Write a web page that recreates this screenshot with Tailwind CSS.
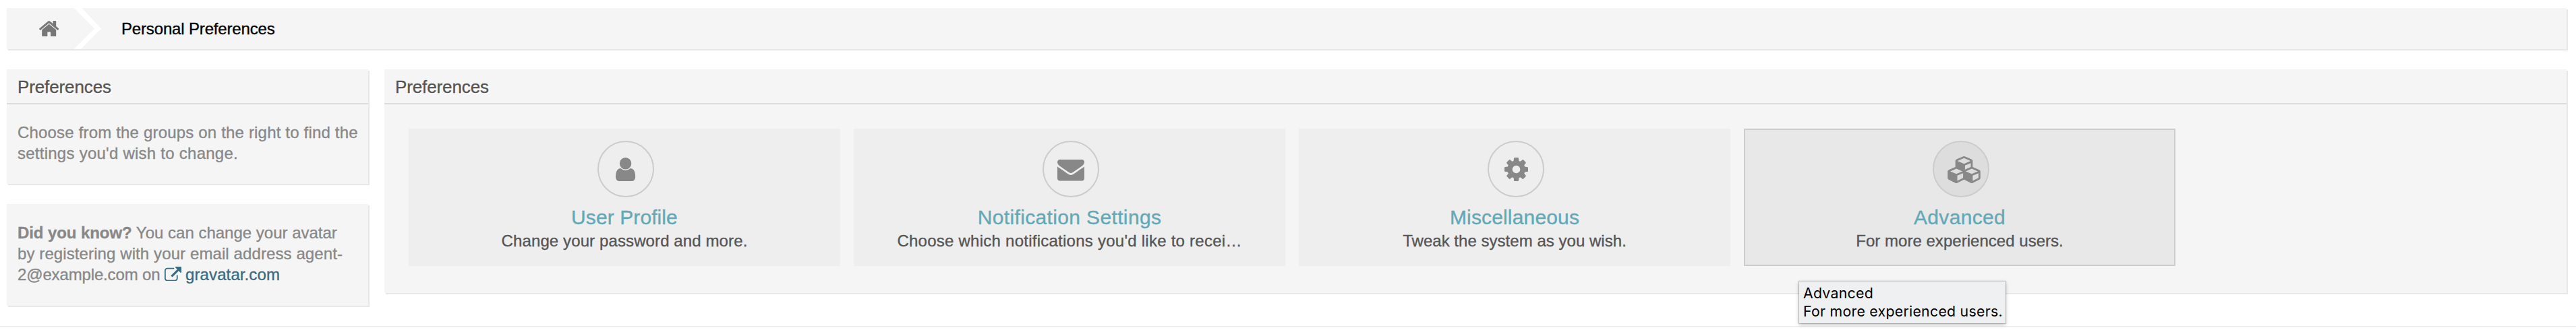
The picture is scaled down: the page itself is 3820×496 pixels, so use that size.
<!DOCTYPE html>
<html lang="en">
<head>
<meta charset="utf-8">
<title>Personal Preferences</title>
<script src="https://cdn.jsdelivr.net/npm/@tailwindcss/browser@4"></script>
</head>
<body class="h-[496px] overflow-hidden bg-white pt-3 font-['Liberation_Sans',Arial,sans-serif] text-2xl text-[#888] [-webkit-text-stroke:0.35px]">

<!-- Breadcrumb -->
<nav class="ml-[10px] mr-[14px] flex h-[61px] items-center bg-[#f5f5f5] shadow-[2px_2px_0_#e8e8e8]">
  <a class="ml-12 w-[51px]">
    <svg class="h-[23.4px] w-[29.4px]" viewBox="89 253 1614 1283" fill="#777"><path d="M1472 992v480q0 26-19 45t-45 19h-384v-384h-256v384h-384q-26 0-45-19t-19-45v-480q0-1 .5-3t.5-3l575-474 575 474q1 2 1 6zm223-69l-62 74q-8 9-21 11h-3q-13 0-21-7l-692-577-692 577q-12 8-24 7-13-2-21-11l-62-74q-8-10-7-23.5t11-21.5l719-599q32-26 76-26t76 26l244 204v-195q0-14 9-23t23-9h192q14 0 23 9t9 23v408l219 182q10 8 11 21.5t-7 23.5z"/></svg>
  </a>
  <svg class="h-[61px] w-[41px]" viewBox="0 0 41 61" fill="#fff"><path d="M1 0H12.500L41 30.500L11 61H.5L31 30.500z"/></svg>
  <span class="ml-[30px] leading-[27px] tracking-[-0.16px] text-black">Personal Preferences</span>
</nav>

<div class="ml-[10px] mr-[14px] mt-[30px] flex items-start gap-6">
  <!-- Sidebar -->
  <aside class="flex w-[536px] shrink-0 flex-col gap-[30px]">
    <section class="h-[170px] bg-[#f5f5f5] shadow-[2px_2px_0_#e8e8e8]">
      <h2 class="h-[52px] border-b-2 border-[#ddd] pl-4 pt-[11px] text-[26px] leading-[30px] tracking-[-0.12px] text-[#555] [text-shadow:2px_2px_0_#fff]">Preferences</h2>
      <p class="whitespace-nowrap pl-4 pt-[26px] leading-[31px]"><span class="tracking-[0.18px]">Choose from the groups on the right to find the</span><br><span class="tracking-[0.25px]">settings you'd wish to change.</span></p>
    </section>
    <section class="h-[151px] bg-[#f5f5f5] shadow-[2px_2px_0_#e8e8e8]">
      <p class="whitespace-nowrap pl-4 pt-[27px] leading-[31px]"><strong class="tracking-[-0.08px]">Did you know?</strong> You can change your avatar<br><span class="tracking-[0.1px]">by registering with your email address agent-</span><br><span class="tracking-[-0.15px]">2@example.com on</span>
        <a class="text-[#3a6b80]"><svg class="inline-block h-[21.5px] w-[25px] align-[-1px]" viewBox="0 0 1792 1536" fill="currentColor"><path d="M1408 928v320q0 119-84.500 203.500t-203.500 84.500h-832q-119 0-203.500-84.500t-84.500-203.500v-832q0-119 84.500-203.500t203.500-84.500h704q14 0 23 9t9 23v64q0 14-9 23t-23 9h-704q-66 0-113 47t-47 113v832q0 66 47 113t113 47h832q66 0 113-47t47-113v-320q0-14 9-23t23-9h64q14 0 23 9t9 23zm384-864v512q0 26-19 45t-45 19-45-19l-176-176-652 652q-10 10-23 10t-23-10l-114-114q-10-10-10-23t10-23l652-652-176-176q-19-19-19-45t19-45 45-19h512q26 0 45 19t19 45z"/></svg><span class="ml-[6px] tracking-[0.1px]">gravatar.com</span></a></p>
    </section>
  </aside>

  <!-- Preference groups -->
  <main class="h-[332px] flex-1 bg-[#f5f5f5] shadow-[2px_2px_0_#e8e8e8]">
    <h2 class="h-[52px] border-b-2 border-[#ddd] pl-4 pt-[11px] text-[26px] leading-[30px] tracking-[-0.12px] text-[#555] [text-shadow:2px_2px_0_#fff]">Preferences</h2>
    <ul class="flex gap-5 pl-9 pt-9 text-center text-[#555]">
      <li class="h-[204px] w-[640px] border-2 border-[#eee] bg-[#eee] pt-4">
        <span class="ml-[278px] flex size-[84px] items-start justify-center rounded-full border-2 border-[#ccc] pt-[23px]">
          <svg class="h-[35px] w-[29.2px]" viewBox="256 128 1280 1536" fill="#888"><path d="M1536 1399q0 109-62.500 187t-150.500 78h-854q-88 0-150.500-78t-62.500-187q0-85 8.500-160.500t31.500-152 58.500-131 94-89 134.500-34.500q131 128 313 128t313-128q76 0 134.500 34.500t94 89 58.500 131 31.500 152 8.500 160.500zm-256-887q0 159-112.500 271.500t-271.500 112.500-271.500-112.500-112.500-271.500 112.500-271.500 271.500-112.500 271.500 112.500 112.500 271.500z"/></svg>
        </span>
        <h3 class="mt-3 text-[30px] leading-[35px] tracking-[0.09px] text-[#64a8b5]">User Profile</h3>
        <p class="mt-px leading-[33px] tracking-[0.11px]">Change your password and more.</p>
      </li>
      <li class="h-[204px] w-[640px] border-2 border-[#eee] bg-[#eee] pt-4">
        <span class="ml-[278px] flex size-[84px] items-start justify-center rounded-full border-2 border-[#ccc] pt-[26px]">
          <svg class="h-[31.5px] w-10" viewBox="0 256 1792 1408" fill="#888"><path d="M1792 710v794q0 66-47 113t-113 47h-1472q-66 0-113-47t-47-113v-794q44 49 101 87 362 246 497 345 57 42 92.500 65.500t94.500 48 110 24.500h2q51 0 110-24.500t94.500-48 92.500-65.500q170-123 498-345 57-39 100-87zm0-294q0 79-49 151t-122 123q-376 261-468 325-10 7-42.500 31t-54 38.500-52 32.500-57.500 27-50 9h-2q-23 0-50-9t-57.500-27-52-32.500-54-38.500-42.500-31q-91-64-262-182.500t-205-142.500q-62-42-117-115.500t-55-136.500q0-78 41.500-130t118.500-52h1472q65 0 112.500 47t47.500 113z"/></svg>
        </span>
        <h3 class="mt-3 text-[30px] leading-[35px] tracking-[0.36px] text-[#64a8b5]">Notification Settings</h3>
        <p class="mt-px leading-[33px] tracking-[0.25px]">Choose which notifications you'd like to recei…</p>
      </li>
      <li class="h-[204px] w-[640px] border-2 border-[#eee] bg-[#eee] pt-4">
        <span class="ml-[278px] flex size-[84px] items-start justify-center rounded-full border-2 border-[#ccc] pt-[23px]">
          <svg class="size-[35px]" viewBox="128 128 1536 1536" fill="#888"><path d="M1152 896q0-106-75-181t-181-75-181 75-75 181 75 181 181 75 181-75 75-181zm512-109v222q0 12-8 23t-20 13l-185 28q-19 54-39 91 35 50 107 138 10 12 10 25t-9 23q-27 37-99 108t-94 71q-12 0-26-9l-138-108q-44 23-91 38-16 136-29 186-7 28-36 28h-222q-14 0-24.500-8.500t-11.500-21.500l-28-184q-49-16-90-37l-141 107q-10 9-25 9-14 0-25-11-126-114-165-168-7-10-7-23 0-12 8-23 15-21 51-66.500t54-70.500q-27-50-41-99l-183-27q-13-2-21-12.500t-8-23.500v-222q0-12 8-23t19-13l186-28q14-46 39-92-40-57-107-138-10-12-10-24 0-10 9-23 26-36 98.500-107.500t94.500-71.500q13 0 26 10l138 107q44-23 91-38 16-136 29-186 7-28 36-28h222q14 0 24.500 8.500t11.500 21.500l28 184q49 16 90 37l142-107q9-9 24-9 13 0 25 10 129 119 165 170 7 8 7 22 0 12-8 23-15 21-51 66.500t-54 70.500q26 50 41 98l183 28q13 2 21 12.500t8 23.500z"/></svg>
        </span>
        <h3 class="mt-3 text-[30px] leading-[35px] tracking-[0.16px] text-[#64a8b5]">Miscellaneous</h3>
        <p class="mt-px leading-[33px] tracking-[0.03px]">Tweak the system as you wish.</p>
      </li>
      <li class="relative h-[204px] w-[640px] border-2 border-[#ccc] bg-[#e8e8e8] pt-4">
        <span class="ml-[278px] flex size-[84px] items-start rounded-full border-2 border-[#ccc] bg-[#ddd] pl-5 pt-[21px]">
          <svg class="h-10 w-[49px] shrink-0" viewBox="0 0 2176 1792" fill="#888"><path d="M640 1632l384-192v-314l-384 164v342zm-64-454l404-173-404-173-404 173zm1088 454l384-192v-314l-384 164v342zm-64-454l404-173-404-173-404 173zm-448-293l384-165v-266l-384 164v267zm-64-379l441-189-441-189-441 189zm1088 518v416q0 36-19 67t-52 47l-448 224q-25 14-57 14t-57-14l-448-224q-4-2-7-4-2 2-7 4l-448 224q-25 14-57 14t-57-14l-448-224q-33-16-52-47t-19-67v-416q0-38 21.500-70t56.500-48l434-186v-400q0-38 21.500-70t56.500-48l448-192q23-10 50-10t50 10l448 192q35 16 56.500 48t21.500 70v400l434 186q36 16 57 48t21 70z"/></svg>
        </span>
        <h3 class="mt-3 text-[30px] leading-[35px] tracking-[0.32px] text-[#64a8b5]">Advanced</h3>
        <p class="mt-px leading-[33px] tracking-[0.03px]">For more experienced users.</p>
        <!-- Hover tooltip -->
        <div class="absolute left-20 top-[225px] h-[62px] w-[306px] whitespace-nowrap bg-[#eff0f2] pl-[6px] pt-1 text-left font-['Inter',sans-serif] text-[21.3px] leading-[27px] tracking-[0.26px] text-black shadow-[0_0_1px_1px_rgba(0,0,0,0.18),0_2px_6px_rgba(0,0,0,0.25)] [-webkit-text-stroke:0]">Advanced<br>For more experienced users.</div>
      </li>
    </ul>
  </main>
</div>

<hr class="mt-[30px] border-t-2 border-[#eee]">
</body>
</html>
